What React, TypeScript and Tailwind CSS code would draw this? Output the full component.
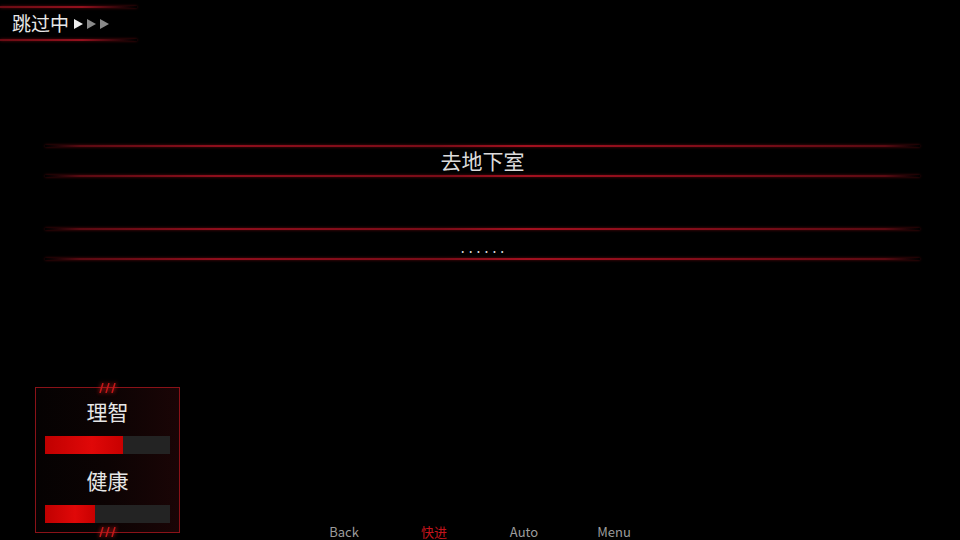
import React from "react";

const cjk = { fontFamily: '"Noto Sans CJK SC", "Noto Sans", sans-serif' };

/** Thin red rule that fades out at both ends. */
function GlowLine({ className = "" }: { className?: string }) {
  return (
    <div
      className={`h-[2px] bg-[linear-gradient(90deg,transparent_0%,#5a0a12_4%,#8f0e1c_20%,#7a0c18_45%,#a3101f_55%,#7a0c18_80%,#5a0a12_96%,transparent_100%)] shadow-[0_0_3px_rgba(200,20,30,0.5)] ${className}`}
    />
  );
}

function Choice({ children }: { children: React.ReactNode }) {
  return (
    <div className="mx-[45px] w-[875px]">
      <GlowLine />
      <div
        className="flex h-[28px] items-center justify-center text-[21px] text-[#dcdcdc]"
        style={cjk}
      >
        {children}
      </div>
      <GlowLine />
    </div>
  );
}

function Slashes() {
  return (
    <svg width="20" height="10" viewBox="0 0 20 10" className="drop-shadow-[0_0_2px_#ff2020]">
      <path d="M5 0 L2 10 M11 0 L8 10 M17 0 L14 10" stroke="#c41818" strokeWidth="1.5" />
    </svg>
  );
}

function Arrow({ color }: { color: string }) {
  return (
    <svg width="9" height="10" viewBox="0 0 9 10">
      <path d="M0 0 L9 5 L0 10 Z" fill={color} />
    </svg>
  );
}

function Meter({ label, value }: { label: string; value: number }) {
  return (
    <div className="flex flex-col items-center">
      <div className="text-[21px] leading-[28px] text-[#e6e6e6]" style={cjk}>
        {label}
      </div>
      <div className="mt-[11px] flex h-[18px] w-[125px] bg-[#232323]">
        <div
          className="h-full bg-[linear-gradient(90deg,#c00000,#e00808_60%,#c80000)]"
          style={{ width: `${value}%` }}
        />
      </div>
    </div>
  );
}

function StatusPanel() {
  return (
    <div className="relative mb-[7px] ml-[35px] h-[146px] w-[145px] border border-[#8a1218] bg-[linear-gradient(90deg,#050202,#0c0303_50%,#1a0506)]">
      <div className="absolute -top-[5px] left-1/2 -translate-x-1/2">
        <Slashes />
      </div>
      <div className="absolute -bottom-[5px] left-1/2 -translate-x-1/2">
        <Slashes />
      </div>
      <div className="flex flex-col gap-[12px] px-[9px] pt-[9px]">
        <Meter label="理智" value={62} />
        <Meter label="健康" value={40} />
      </div>
    </div>
  );
}

const menu = [
  { label: "Back", active: false },
  { label: "快进", active: true },
  { label: "Auto", active: false },
  { label: "Menu", active: false },
];

export default function App() {
  return (
    <div className="flex h-[540px] w-[960px] flex-col overflow-hidden bg-black">
      {/* skip indicator */}
      <div className="mt-[6px] w-[137px]">
        <div className="h-[2px] bg-[linear-gradient(90deg,#6a0c14,#93101d_60%,transparent)] shadow-[0_0_3px_rgba(200,20,30,0.5)]" />
        <div className="flex h-[31px] items-center pl-[12px]">
          <span className="text-[19px] text-[#e8e8e8]" style={cjk}>
            跳过中
          </span>
          <span className="ml-[5px] flex gap-[4px]">
            <Arrow color="#eeeeee" />
            <Arrow color="#8a8a8a" />
            <Arrow color="#8a8a8a" />
          </span>
        </div>
        <div className="h-[2px] bg-[linear-gradient(90deg,#6a0c14,#93101d_60%,transparent)] shadow-[0_0_3px_rgba(200,20,30,0.5)]" />
      </div>

      {/* choices */}
      <div className="mt-[104px] flex flex-col gap-[51px]">
        <Choice>去地下室</Choice>
        <Choice>
          <span className="translate-x-[2px] translate-y-[3px] text-[14px] tracking-[4px]">......</span>
        </Choice>
      </div>

      <div className="flex-1" />

      {/* bottom hud */}
      <div className="flex items-end">
        <StatusPanel />
        <div
          className="ml-[119px] grid grid-cols-4 text-[13px] leading-[16px]"
          style={{ fontFamily: '"Noto Sans CJK SC", Lato, sans-serif' }}
        >
          {menu.map((m) => (
            <div
              key={m.label}
              className={`w-[90px] text-center ${m.active ? "text-[#c4141c]" : "text-[#9c9c9c]"}`}
            >
              {m.label}
            </div>
          ))}
        </div>
      </div>
    </div>
  );
}
